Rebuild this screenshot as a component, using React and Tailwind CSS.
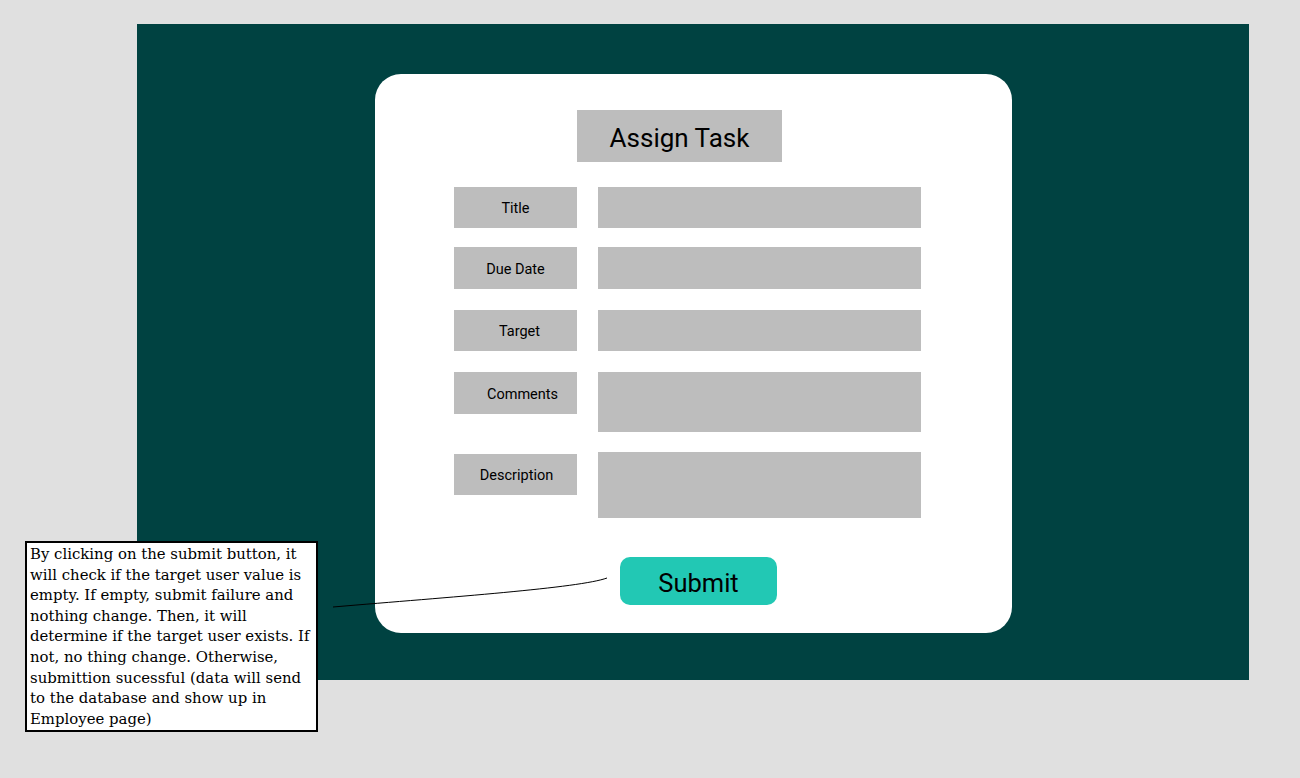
import React from "react";

const Label = ({ children, className = "" }) => (
  <div className={`w-[123px] h-[41px] bg-[#bdbdbd] flex items-center justify-center text-[14.5px] text-black pt-[3px] ${className}`}>
    {children}
  </div>
);

const lines = [
  "By clicking on the submit button, it",
  "will check if the target user value is",
  "empty. If empty, submit failure and",
  "nothing change. Then, it will",
  "determine if the target user exists. If",
  "not, no thing change. Otherwise,",
  "submittion sucessful (data will send",
  "to the database and show up in",
  "Employee page)",
];

export default function App() {
  return (
    <div className="relative w-[1300px] h-[778px] bg-[#e0e0e0] overflow-hidden" style={{ fontFamily: "Roboto, sans-serif" }}>
      <div className="pt-[24px] pl-[137px]">
        <div className="w-[1112px] h-[656px] bg-[#004241] pt-[50px] pl-[238px]">
          <div className="w-[637px] h-[559px] bg-white rounded-[26px] pt-[36px] flex flex-col">
            <div className="ml-[202px] w-[205px] h-[52px] bg-[#bdbdbd] flex items-center justify-center pt-[4px] text-[26px] text-black">
              Assign Task
            </div>
            <div className="ml-[79px] flex flex-col">
              <div className="mt-[25px] flex gap-[21px]">
                <Label>Title</Label>
                <div className="w-[323px] h-[41px] bg-[#bdbdbd]" />
              </div>
              <div className="mt-[19px] flex gap-[21px]">
                <Label className="h-[42px]">Due Date</Label>
                <div className="w-[323px] h-[42px] bg-[#bdbdbd]" />
              </div>
              <div className="mt-[21px] flex gap-[21px]">
                <Label className="pl-[8px]">Target</Label>
                <div className="w-[323px] h-[41px] bg-[#bdbdbd]" />
              </div>
              <div className="mt-[21px] flex gap-[21px] items-start">
                <Label className="h-[42px] pl-[14px]">Comments</Label>
                <div className="w-[323px] h-[60px] bg-[#bdbdbd]" />
              </div>
              <div className="mt-[20px] flex gap-[21px] items-start">
                <Label className="mt-[2px] pl-[2px]">Description</Label>
                <div className="w-[323px] h-[66px] bg-[#bdbdbd]" />
              </div>
            </div>
            <div className="mt-[39px] ml-[245px] w-[157px] h-[48px] bg-[#22c8b4] rounded-[10px] flex items-center justify-center pt-[4px] text-[25.5px] text-black">
              Submit
            </div>
          </div>
        </div>
      </div>

      <svg className="absolute left-0 top-0" width="1300" height="778" style={{ pointerEvents: "none" }}>
        <path d="M333 607 C 450 597, 580 588, 607 578" fill="none" stroke="#000" strokeWidth="1" />
      </svg>

      <div
        className="absolute left-[25px] top-[541px] w-[293px] h-[191px] bg-white border-2 border-black pl-[3px] pt-[1px] text-[14.9px] leading-[20.6px] text-black whitespace-nowrap"
        style={{ fontFamily: '"DejaVu Serif", serif' }}
      >
        {lines.map((l, i) => (
          <div key={i}>{l}</div>
        ))}
      </div>
    </div>
  );
}
